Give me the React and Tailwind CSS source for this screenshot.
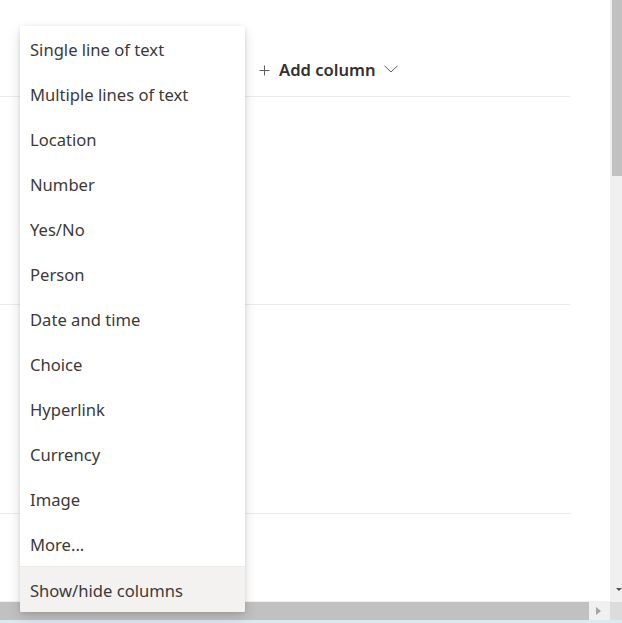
import React from "react";

const items = [
  "Single line of text",
  "Multiple lines of text",
  "Location",
  "Number",
  "Yes/No",
  "Person",
  "Date and time",
  "Choice",
  "Hyperlink",
  "Currency",
  "Image",
  "More...",
];

export default function App() {
  return (
    <div
      className="relative w-[622px] h-[623px] overflow-hidden bg-white flex flex-col"
      style={{ fontFamily: '"Segoe UI", "Noto Sans", "Open Sans", sans-serif' }}
    >
      <div className="flex h-[601px]">
        <div className="flex-1 flex flex-col">
          <div className="w-[570px] pt-[44px] h-[97px] border-b border-[#edebe9] flex">
            <div className="ml-[259px] h-[52px] flex items-center text-[#323130]">
              <svg width="11" height="11" viewBox="0 0 11 11" className="mr-[9px]">
                <path d="M5.5 0.5V10.5M0.5 5.5H10.5" stroke="#605e5c" strokeWidth="1" fill="none" />
              </svg>
              <span className="text-[16.6px] font-semibold leading-none">Add column</span>
              <svg width="14" height="8" viewBox="0 0 14 8" className="ml-[8px] mb-[2px]">
                <path d="M0.5 0.8L7 7L13.5 0.8" stroke="#605e5c" strokeWidth="1" fill="none" />
              </svg>
            </div>
          </div>
          <div className="w-[570px] h-[208px] border-b border-[#edebe9]" />
          <div className="w-[570px] h-[209px] border-b border-[#edebe9]" />
        </div>
        <div className="w-[12px] bg-[#f0f0f0] pl-[2px] relative">
          <div className="h-[176px] bg-[#c1c1c1]" />
          <div className="absolute right-0 bottom-[10px] w-0 h-0 border-l-[3px] border-r-[3px] border-t-[3px] border-l-transparent border-r-transparent border-t-[#505050]" />
        </div>
      </div>
      <div className="flex h-[19px] border-t border-[#f0f0f0]">
        <div className="w-[589px] bg-[#c1c1c1]" />
        <div className="w-[21px] bg-[#f0f0f0] flex items-center justify-center">
          <div className="w-0 h-0 border-t-[4px] border-b-[4px] border-l-[5px] border-t-transparent border-b-transparent border-l-[#a3a3a3] ml-[-2px]" />
        </div>
        <div className="w-[12px] bg-[#dcdcdc]" />
      </div>
      <div className="h-[3px] bg-[#dbe9f0]" />

      <div className="absolute left-[20px] top-[26px] w-[225px] bg-white rounded-[2px] shadow-[0_6px_14px_rgba(0,0,0,0.13),0_1px_4px_rgba(0,0,0,0.11)] overflow-hidden">
        {items.map((t) => (
          <div key={t} className="h-[45px] px-[10px] pt-[3px] flex items-center text-[16.6px] text-[#3b3a39]">
            {t}
          </div>
        ))}
        <div className="h-px bg-[#edebe9]" />
        <div className="h-[45px] px-[10px] pt-[3px] flex items-center text-[16.6px] text-[#3b3a39] bg-[#f3f2f1]">
          Show/hide columns
        </div>
      </div>
    </div>
  );
}
